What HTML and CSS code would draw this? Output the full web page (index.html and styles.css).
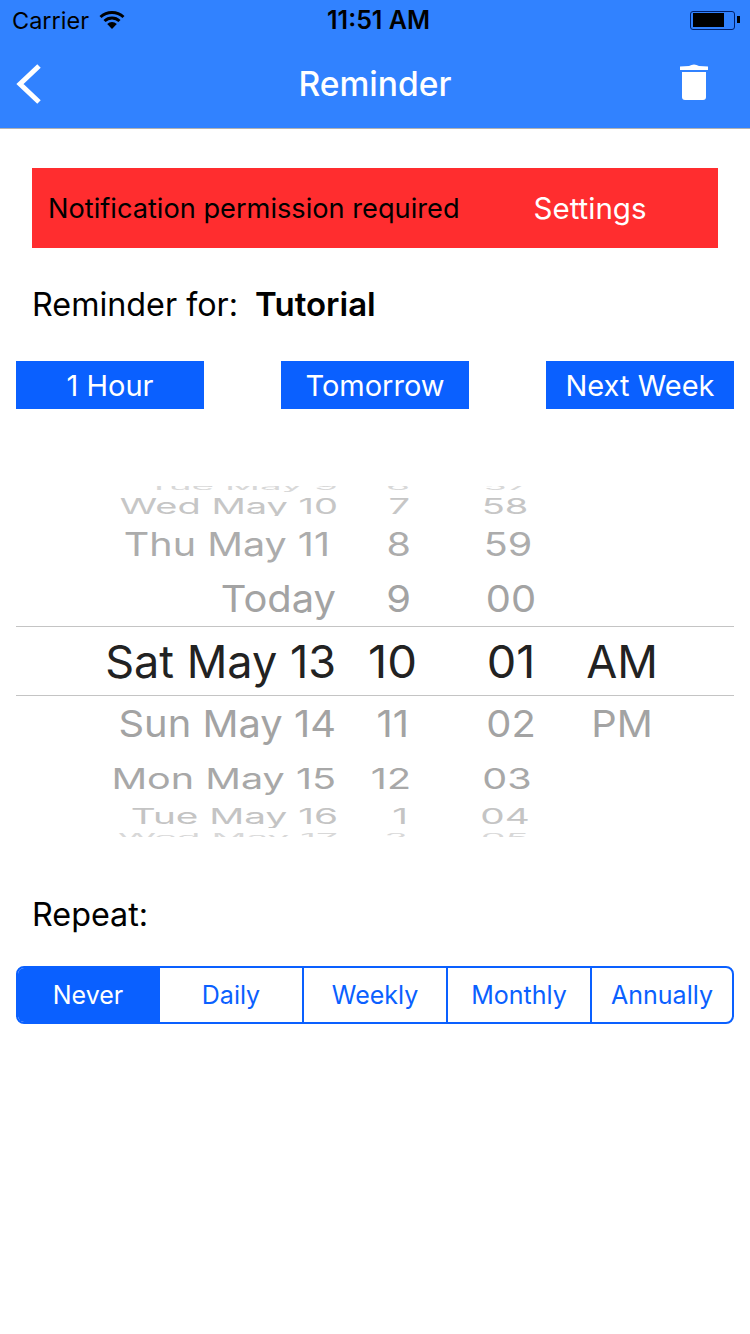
FILE: index.html
```html
<!DOCTYPE html>
<html lang="en">
<head>
    <meta charset="UTF-8">
    <meta name="viewport" content="width=device-width, initial-scale=1.0">
    <title>Reminder</title>
    <link rel="stylesheet" href="styles.css">
</head>
<body>
    <header class="top">
        <div class="status">
            <div class="status-left">
                <span>Carrier</span>
                <svg class="wifi" width="26" height="20" viewBox="0 0 26 20">
                    <path d="M1.5 7 A17 17 0 0 1 24.5 7" fill="none" stroke="#000" stroke-width="3"/>
                    <path d="M5.5 11 A11 11 0 0 1 20.5 11" fill="none" stroke="#000" stroke-width="3"/>
                    <path d="M13 19 L8.2 14 A7 7 0 0 1 17.8 14 Z" fill="#000"/>
                </svg>
            </div>
            <div class="status-time">11:51 AM</div>
            <div class="battery"><div class="battery-level"></div></div>
        </div>
        <nav class="nav">
            <svg class="back" width="30" height="42" viewBox="0 0 30 42">
                <path d="M25 3 L6 21 L25 39" fill="none" stroke="#fff" stroke-width="5"/>
            </svg>
            <h1>Reminder</h1>
            <svg class="trash" width="28" height="36" viewBox="0 0 28 36">
                <path d="M9 2 Q14 -1 19 2 L28 2.5 V6 H0 V2.5 Z" fill="#fff"/>
                <path d="M2 8 H26 V33 Q26 36 23 36 H5 Q2 36 2 33 Z" fill="#fff"/>
            </svg>
        </nav>
    </header>

    <div class="banner">
        <span class="banner-text">Notification permission required</span>
        <span class="banner-link">Settings</span>
    </div>

    <div class="label">Reminder for: <b>Tutorial</b></div>

    <div class="quick">
        <button type="button">1 Hour</button>
        <button type="button">Tomorrow</button>
        <button type="button">Next Week</button>
    </div>

    <div class="picker">
        <div class="row r1"><span class="d">Tue May 9</span><span class="h">6</span><span class="m">57</span></div>
        <div class="row r2"><span class="d">Wed May 10</span><span class="h">7</span><span class="m">58</span></div>
        <div class="row r3"><span class="d">Thu May 11</span><span class="h">8</span><span class="m">59</span></div>
        <div class="row r4"><span class="d">Today</span><span class="h">9</span><span class="m">00</span></div>
        <div class="row selected"><span class="d">Sat May 13</span><span class="h">10</span><span class="m">01</span><span class="a">AM</span></div>
        <div class="row r5"><span class="d">Sun May 14</span><span class="h">11</span><span class="m">02</span><span class="a">PM</span></div>
        <div class="row r6"><span class="d">Mon May 15</span><span class="h">12</span><span class="m">03</span></div>
        <div class="row r7"><span class="d">Tue May 16</span><span class="h">1</span><span class="m">04</span></div>
        <div class="row r8"><span class="d">Wed May 17</span><span class="h">2</span><span class="m">05</span></div>
    </div>

    <div class="label repeat">Repeat:</div>

    <div class="segments">
        <div class="seg active">Never</div>
        <div class="seg">Daily</div>
        <div class="seg">Weekly</div>
        <div class="seg">Monthly</div>
        <div class="seg">Annually</div>
    </div>
</body>
</html>
```

FILE: styles.css
```css
body {
    font-family: Inter, Roboto, "Liberation Sans", sans-serif;
    background-color: #fff;
    margin: 0;
    padding: 0;
    color: #000;
}

.top {
    background-color: #3182ff;
    height: 128px;
    border-bottom: 1px solid #b2b2b2;
}

.status {
    height: 40px;
    padding: 0 15px 0 12px;
    display: flex;
    align-items: center;
    justify-content: space-between;
    font-size: 23.5px;
    position: relative;
}

.status-left {
    display: flex;
    align-items: center;
    gap: 10px;
}

.status-time {
    position: absolute;
    left: 7px;
    right: 0;
    text-align: center;
    font-size: 25px;
    font-weight: 600;
}

.battery {
    width: 45px;
    height: 19px;
    box-sizing: border-box;
    border: 1.5px solid #00206a;
    border-radius: 3px;
    padding: 1.5px;
    position: relative;
}

.battery::after {
    content: "";
    position: absolute;
    right: -5.5px;
    top: 4.5px;
    width: 3px;
    height: 7px;
    background-color: #000;
}

.battery-level {
    width: 31px;
    height: 100%;
    background-color: #000;
}

.nav {
    height: 88px;
    padding: 0 42px 0 14px;
    display: flex;
    align-items: center;
    justify-content: space-between;
    position: relative;
}

.nav h1 {
    position: absolute;
    left: 0;
    right: 0;
    margin: 0 0 2px;
    text-align: center;
    color: #fff;
    font-size: 33.6px;
    font-weight: 500;
}

.trash {
    margin-bottom: 4px;
}

.banner {
    margin: 39px 32px 0;
    height: 80px;
    background-color: #ff2d2f;
    display: flex;
    align-items: center;
    padding-left: 16px;
    font-size: 27.2px;
}

.banner-link {
    color: #fff;
    margin-left: 74px;
    font-size: 29.5px;
}

.label {
    font-size: 32.3px;
    margin: 36px 0 0 32px;
    line-height: 40px;
}

.label b {
    font-size: 33px;
    font-weight: 600;
    margin-left: 8px;
}

.quick {
    display: flex;
    justify-content: space-between;
    padding: 0 16px;
    margin-top: 36px;
}

.quick button {
    width: 188px;
    height: 48px;
    padding: 1px 0 0;
    border: none;
    background-color: #0a60ff;
    color: #fff;
    font-family: inherit;
    font-size: 29px;
}

.picker {
    margin: 77px 16px 0;
    height: 351px;
    overflow: hidden;
}

.row {
    display: grid;
    grid-template-columns: 320px 75px 146px 130px;
    align-items: center;
    overflow: hidden;
    color: #a3a3a3;
    font-size: 38px;
}

/* each wheel row is squashed a bit more the further it is from the middle */
.row span {
    display: block;
    white-space: nowrap;
    transform: translateX(var(--tx, 0)) translateY(var(--ty, 0)) scale(var(--sx, 1), var(--sy, 1));
}

.d, .h {
    text-align: right;
    transform-origin: right center;
}

.m {
    margin-left: 54px;
    text-align: center;
}

.a {
    text-align: center;
}

.r1 {
    height: 10px;
    grid-template-rows: 10px;
    align-items: end;
    color: #d8d8d8;
    line-height: 20px;
    --sx: 1.02;
    --sy: 0.28;
}

.r2 {
    height: 20px;
    color: #c6c6c6;
    line-height: 20px;
    --sy: 0.55;
}

.r3 {
    height: 56px;
    color: #acacac;
    --sx: 1.04;
    --sy: 0.84;
}

.r4 {
    height: 54px;
    --ty: -1px;
    --sx: 1.05;
    --sy: 0.98;
}

.selected {
    height: 70px;
    box-sizing: border-box;
    border-top: 1px solid #c4c4c4;
    border-bottom: 1px solid #c4c4c4;
    color: #222;
    font-size: 45px;
}

.selected .h {
    margin-right: -6px;
    --sx: 1.05;
}

.selected .m {
    --sx: 1.04;
}

.r5 {
    height: 56px;
    --ty: -1px;
    --sx: 1.05;
    --sy: 0.98;
}

.r6 {
    height: 52px;
    color: #a8a8a8;
    --sx: 1.04;
    --sy: 0.76;
}

.r7 {
    height: 24px;
    color: #c4c4c4;
    line-height: 24px;
    --sx: 1.02;
    --sy: 0.55;
}

.r8 {
    height: 9px;
    grid-template-rows: 18px;
    align-items: start;
    color: #d8d8d8;
    line-height: 18px;
    --sx: 1.02;
    --sy: 0.28;
}

.r1 .d, .r2 .d, .r7 .d, .r8 .d { --tx: 2px; }
.r3 .d { --tx: -6px; }
.r1 .h, .r2 .h { --tx: -1px; }
.r5 .h { --tx: -2px; }
.r7 .h, .r8 .h { --tx: -3px; }
.r1 .m { --tx: -5px; }
.r2 .m, .r7 .m, .r8 .m { --tx: -6px; }
.r3 .m { --tx: -3px; }
.r6 .m { --tx: -4px; }

.repeat {
    margin-top: 58px;
}

.segments {
    margin: 31px 16px 0;
    height: 58px;
    box-sizing: border-box;
    border: 2px solid #0a60ff;
    border-radius: 8px;
    overflow: hidden;
    display: grid;
    grid-template-columns: 142px 144px 144px 144px 140px;
}

.seg {
    display: flex;
    align-items: center;
    justify-content: center;
    color: #0a60ff;
    font-size: 25px;
    border-right: 2px solid #0a60ff;
}

.seg:last-child {
    border-right: none;
}

.seg.active {
    background-color: #0a60ff;
    color: #fff;
}
```
